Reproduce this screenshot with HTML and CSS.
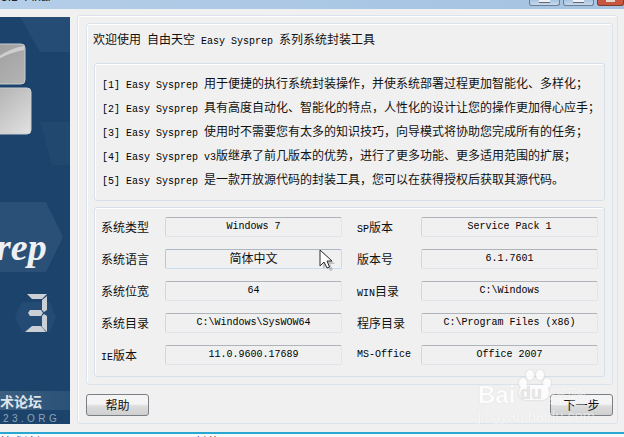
FILE: index.html
```html
<!DOCTYPE html>
<html lang="zh-CN">
<head>
<meta charset="utf-8">
<title>Easy Sysprep</title>
<link rel="stylesheet" href="styles.css">
</head>
<body>
<div class="window">
  <header class="titlebar">
    <span class="title">3.1 Final</span>
    <div class="controls"><span class="ctl min"></span><span class="ctl max"></span><span class="ctl close"></span></div>
  </header>
  <main class="client">
    <svg class="banner" width="70" height="407" viewBox="0 0 70 407" aria-hidden="true">
      <defs>
        <linearGradient id="t1" x1="0" y1="0" x2="1" y2="1"><stop offset="0" stop-color="#9b9b9b"/><stop offset="1" stop-color="#b4b4b4"/></linearGradient>
        <linearGradient id="t2" x1="0" y1="0" x2="1" y2="1"><stop offset="0" stop-color="#a9a9a9"/><stop offset="1" stop-color="#e2e2e2"/></linearGradient>
        <linearGradient id="st" x1="0" y1="0" x2="1" y2="0"><stop offset="0" stop-color="#3c5f80"/><stop offset="1" stop-color="#2a5178"/></linearGradient>
      </defs>
      <rect width="70" height="407" fill="#1c436b"/>
      <polygon points="20,0 70,0 70,35 40,35" fill="#244c74"/>
      <polygon points="0,185 46,185 63,220 46,255 0,255" fill="#2b5078"/>
      <polygon points="40,105 70,105 70,148 52,148" fill="#214970"/>
      <polygon points="22,285 50,285 56,300 50,315 22,315 15,300" fill="#234b73"/>
      <rect x="-20" y="27" width="45" height="40" rx="4" fill="url(#t1)" stroke="#c8ced4"/>
      <path d="M-5 42 Q10 31 24 29 L24 33 Q10 35 -5 44Z" fill="#cfcfcf"/>
      <rect x="-20" y="71" width="51" height="46" rx="4" fill="url(#t2)" stroke="#c8ced4"/>
      <text class="rep" x="-4" y="243">rep</text>
      <g fill="#ccd0d6">
        <polygon points="27,277 47,277 42,282 32,282"/>
        <polygon points="47,279 47,293 44,295 42,293 42,283"/>
        <polygon points="30,293 41,293 43,296 41,299 30,299 28,296"/>
        <polygon points="44,297 47,299 47,315 42,310 42,299"/>
        <polygon points="32,309 41,309 46,315 25,315"/>
      </g>
      <rect y="374" width="70" height="19" fill="url(#st)"/>
      <text class="forum" x="0" y="390">术论坛</text>
      <text class="org" x="3" y="405">23.ORG</text>
    </svg>
    <section class="frame">
      <div class="group">
        <h1 class="heading">欢迎使用 自由天空 <span class="m">Easy Sysprep</span> 系列系统封装工具</h1>
        <div class="box notes">
          <p><span class="m">[1] Easy Sysprep</span> 用于便捷的执行系统封装操作，并使系统部署过程更加智能化、多样化；</p>
          <p><span class="m">[2] Easy Sysprep</span> 具有高度自动化、智能化的特点，人性化的设计让您的操作更加得心应手；</p>
          <p><span class="m">[3] Easy Sysprep</span> 使用时不需要您有太多的知识技巧，向导模式将协助您完成所有的任务；</p>
          <p><span class="m">[4] Easy Sysprep v3</span>版继承了前几版本的优势，进行了更多功能、更多适用范围的扩展；</p>
          <p><span class="m">[5] Easy Sysprep</span> 是一款开放源代码的封装工具，您可以在获得授权后获取其源代码。</p>
        </div>
        <div class="box info">
          <span class="lbl">系统类型</span><span class="fld m">Windows 7</span>
          <span class="lbl"><span class="m">SP</span>版本</span><span class="fld m">Service Pack 1</span>
          <span class="lbl">系统语言</span><span class="fld hover">简体中文</span>
          <span class="lbl">版本号</span><span class="fld m">6.1.7601</span>
          <span class="lbl">系统位宽</span><span class="fld m">64</span>
          <span class="lbl"><span class="m">WIN</span>目录</span><span class="fld m">C:\Windows</span>
          <span class="lbl">系统目录</span><span class="fld m">C:\Windows\SysWOW64</span>
          <span class="lbl">程序目录</span><span class="fld m">C:\Program Files (x86)</span>
          <span class="lbl"><span class="m">IE</span>版本</span><span class="fld m">11.0.9600.17689</span>
          <span class="lbl m">MS-Office</span><span class="fld m">Office 2007</span>
        </div>
      </div>
      <div class="actions">
        <button class="btn" type="button">帮助</button>
        <button class="btn" type="button">下一步</button>
      </div>
    </section>
  </main>
  <footer class="taskstrip"><span class="clip">技术论坛</span><span class="clip">封装工具</span></footer>
</div>
<svg class="cursor" width="18" height="24" viewBox="0 0 18 24" aria-hidden="true">
  <path d="M4 3 L16 15 L11 15 L14 21 L11 22 L8 16 L4 20Z" fill="#888" opacity=".45"/>
  <path d="M1 1 L1 17 L5 13 L8 19 L10.500 18 L8 12 L13 12Z" fill="#fff" stroke="#2a2a2a" stroke-width="1"/>
</svg>
<div class="watermark" aria-hidden="true">
  <svg class="paw" width="38" height="30" viewBox="0 0 38 30">
    <g fill="#fff">
      <ellipse cx="8" cy="13" rx="4" ry="5"/><ellipse cx="15" cy="5" rx="4" ry="5"/><ellipse cx="25" cy="5" rx="4" ry="5"/><ellipse cx="32" cy="13" rx="4" ry="5"/>
      <rect x="4" y="15" width="30" height="15" rx="7"/>
    </g>
  </svg>
  <span class="wm-bai">Bai</span><span class="wm-du">du</span><span class="wm-jy">经验</span>
  <span class="wm-url">jingyan.baidu.com</span>
</div>
</body>
</html>
```
FILE: styles.css
```css
* { box-sizing: border-box; }
html, body { margin: 0; height: 100%; overflow: hidden; background: #f0f0f0; }
body { position: relative; }
.window {
  width: 624px; height: 437px;
  display: flex; flex-direction: column;
  font: 12px/16px "Noto Sans CJK SC", sans-serif;
  word-spacing: 3.300px;
  color: #111;
}
.m { font-family: "Liberation Mono", "DejaVu Sans Mono", monospace; font-size: 10px; word-spacing: 0; color: #000; }

.titlebar {
  height: 9px; flex: none; display: flex; justify-content: space-between;
  background: linear-gradient(90deg, #b5cee8, #a9c6e4 60%, #a6c3e2);
  overflow: hidden;
}
.title { font: 12px/12px "Liberation Sans", sans-serif; margin: -9px 0 0 1px; color: #222; white-space: nowrap; }
.controls { display: flex; gap: 3px; }
.ctl { display: flex; justify-content: center; height: 6px; border: 1px solid #6d7f92; border-top: 0; border-radius: 0 0 3px 3px; background: linear-gradient(#a9c4e0, #c6d9ec); }
.ctl::after { content: ""; display: block; width: 11px; height: 2px; background: #eef2f6; border-bottom: 1px solid #667; }
.min, .max { width: 31px; }
.close { width: 27px; background: #c9573f; border-color: #7a3a30; }
.close::after { width: 9px; background: #e8d5d0; border-bottom: 0; }

.client { flex: 1; min-height: 0; display: flex; align-items: flex-start; padding-top: 8px; gap: 7px; }
.banner { flex: none; display: block; }
.banner .rep { font: italic bold 38px "Liberation Serif", serif; fill: #eef0f3; }
.banner .forum { font: bold 14px "Noto Sans CJK SC", sans-serif; fill: #dfe4ea; }
.banner .org { font: 10px "Liberation Sans", sans-serif; letter-spacing: 3.400px; fill: #8fa3b7; }

.frame {
  width: 541px; height: 409px; margin-top: -2px; padding: 7px 4px 0 8px;
  border: 1px solid #dbe3ec; border-radius: 3px; box-shadow: inset 1px 1px 0 #fff;
  display: flex; flex-direction: column;
}
.group {
  height: 362px; padding: 0 7px; flex: none;
  border: 1px solid #dbe3ec; border-radius: 3px; box-shadow: inset 1px 1px 0 #fff;
}
.heading { margin: 7px 0 0 -1px; height: 32px; font: inherit; line-height: 16px; white-space: nowrap; }
.box { border: 1px solid #d7e0ea; border-radius: 3px; box-shadow: inset 1px 1px 0 #fff; }
.notes { height: 138px; padding: 7px 0 0 7px; }
.notes p { margin: 0; height: 24px; line-height: 24px; white-space: nowrap; }
.info {
  height: 170px; margin-top: 6px; padding: 9px 0 0 6px;
  display: grid; grid-template-columns: 64px 192px 64px 177px;
  grid-auto-rows: 20px; row-gap: 12px;
}
.lbl { line-height: 20px; white-space: nowrap; }
.fld {
  display: block; text-align: center; line-height: 18px; white-space: nowrap;
  border: 1px solid #dfe5ea; border-top: 1px solid #aeb4ba; border-left: 1px solid #d0d6dc;
  border-radius: 2px; background: #f0f0f0;
}
.fld:nth-child(4n+2) { margin-right: 15px; }
.hover { border-color: #a9b7c6 #c9dcee #c9dcee #b9c8d8; font-size: 12px; line-height: 16px; }

.actions { display: flex; justify-content: space-between; padding-top: 9px; }
.btn {
  width: 63px; height: 22px; padding: 0;
  font: 12px/16px "Noto Sans CJK SC", sans-serif; color: #111;
  border: 1px solid #7a7f85; border-radius: 3px;
  background: linear-gradient(#f4f4f4 0 45%, #dcdcdc 55%, #d0d0d0);
}

.taskstrip {
  height: 5px; flex: none; margin-top: 9px; overflow: hidden;
  display: flex;
  border-top: 2px solid #2aa6d0; background: #f6f8fa;
}
.clip { font-size: 12px; line-height: 12px; margin-top: 2px; color: #444; white-space: nowrap; }
.taskstrip .clip:first-child { width: 195px; }

.cursor { position: absolute; left: 319px; top: 249px; }

.watermark { position: absolute; left: 476px; top: 368px; width: 116px; height: 56px; color: #fff; opacity: .8; pointer-events: none; text-shadow: 0 0 1px #c4c4c4; word-spacing: 0; }
.paw { position: absolute; left: 39px; top: 2px; filter: drop-shadow(0 0 1px #c8c8c8); }
.wm-bai { position: absolute; left: 2px; top: 12px; font: bold 24px/30px "Liberation Sans", sans-serif; }
.wm-du { position: absolute; left: 44px; top: 13px; font: bold 18px/24px "Liberation Sans", sans-serif; color: #e6e6e6; }
.wm-jy { position: absolute; left: 72px; top: 16px; font: 19px/24px "Noto Sans CJK SC", sans-serif; opacity: .5; }
.wm-url { position: absolute; left: 2px; top: 40px; font: 14.500px/16px "Liberation Sans", sans-serif; white-space: nowrap; opacity: .6; }
```
